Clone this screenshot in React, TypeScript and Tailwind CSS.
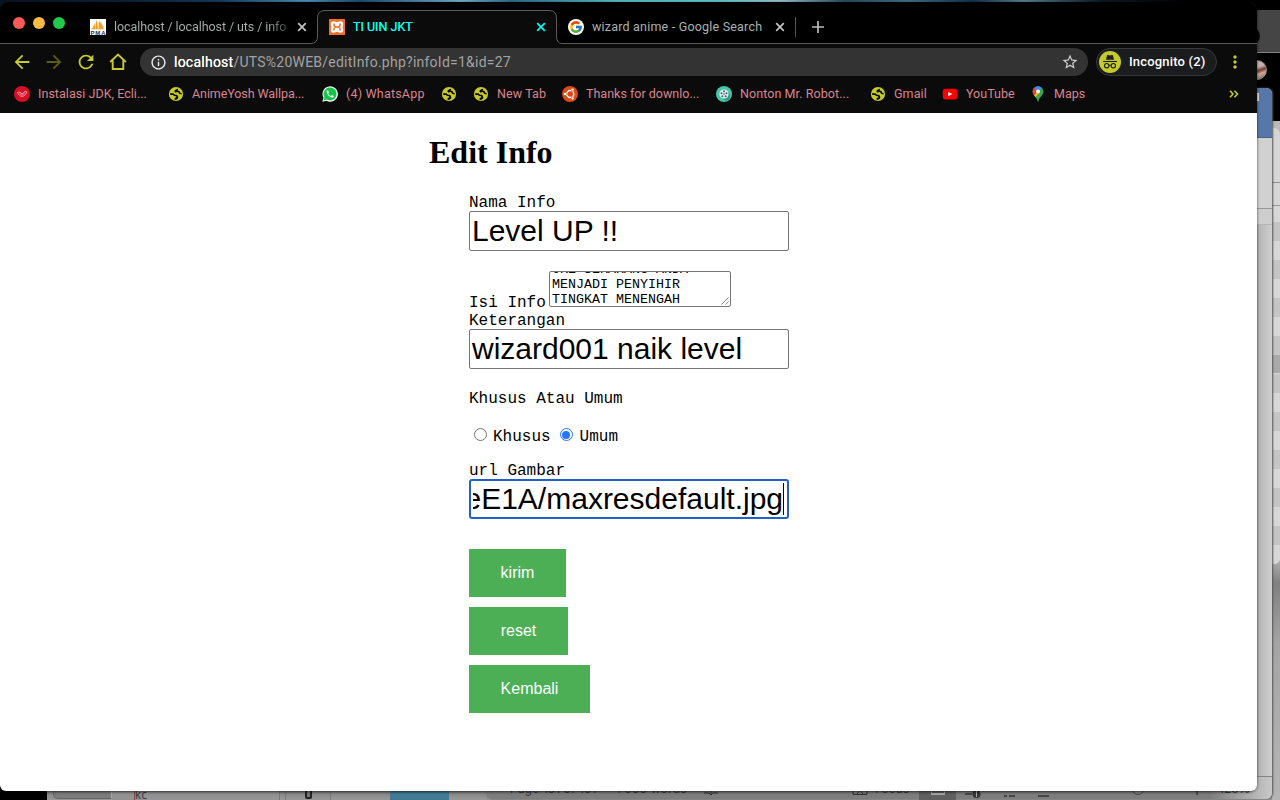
import React from "react";
import { FcGoogle } from "react-icons/fc";
import {
  MdArrowBack,
  MdArrowForward,
  MdRefresh,
  MdStarOutline,
  MdInfoOutline,
  MdMoreVert,
} from "react-icons/md";

const LIME = "#c5cb2b";

function PmaIcon() {
  return (
    <svg width="16" height="16" viewBox="0 0 16 16" className="shrink-0">
      <rect width="16" height="16" fill="#fff" />
      <path d="M1.500 10C3.500 8 4.500 5 4.700 3L5 10ZM5.500 10L6 1C7.500 3 8 7 8 10ZM8.500 10L9 2C12 4 13 7 13.500 10Z" fill="#f89c1c" />
      <path d="M1 10H14" stroke="#f5b45a" strokeWidth="0.800" />
      <text x="0.5" y="15.800" fontSize="6" fontWeight="700" textLength="15" fontFamily="Liberation Sans, sans-serif" fill="#2a2d55">PMA</text>
    </svg>
  );
}

function XamppIcon() {
  return (
    <svg width="16" height="16" viewBox="0 0 16 16" className="shrink-0">
      <rect width="16" height="16" rx="0.500" fill="#f0702a" />
      <path d="M4.500 2.300C6.200 2.300 7 3.200 8 3.200S9.800 2.300 11.500 2.300C13.400 2.300 14.200 3.700 14.200 5.300C14.200 6.700 13.600 7.300 13.600 8S14.200 9.300 14.200 10.700C14.200 12.400 13.400 13.700 11.500 13.700C9.800 13.700 9 12.800 8 12.800S6.200 13.700 4.500 13.700C2.600 13.700 1.800 12.400 1.800 10.700C1.800 9.300 2.400 8.700 2.400 8S1.800 6.700 1.800 5.300C1.800 3.700 2.600 2.300 4.500 2.300Z" fill="#fff" />
      <path d="M5 11V10Q5 8 8 8T11 6V5M5 5V6Q5 8 8 8T11 10V11" fill="none" stroke="#f0702a" strokeWidth="1.500" strokeLinecap="round" />
    </svg>
  );
}

function GlobeIcon() {
  return (
    <svg width="16" height="16" viewBox="0 0 16 16" className="shrink-0">
      <circle cx="8" cy="8" r="7.100" fill={LIME} />
      <path d="M10.200 2.800L8.800 3L6.600 4.200L6.500 6L8 6.700L8.800 6L10.300 6.200L10.800 7.800L13.600 8.400L13.700 7L12.300 6.800L11.500 4.800L9.700 4.700ZM2.200 7L2.300 9L5 9L6 10L8 10.300L8.300 11.300L6.700 12L6.500 13.800L8 14L10.300 12.200L10 9.800L8.500 8.800L7 8.700L5.800 7.500Z" fill="#0b0b0b" />
    </svg>
  );
}

function RedHeartIcon() {
  return (
    <svg width="16" height="16" viewBox="0 0 16 16" className="shrink-0">
      <circle cx="8" cy="8" r="8" fill="#d70f26" />
      <path d="M3.500 6.500C5 5.800 7 6.300 8 8C9.500 6 12 4.800 12.600 5.500C13 7.500 10 10.300 8.200 10.500C6 10.500 4.500 8.500 3.500 6.500M6 7.500L8 9.500L11 6.500" fill="none" stroke="#f7a8b2" strokeWidth="0.900" />
    </svg>
  );
}

function WhatsIcon() {
  return (
    <svg width="16" height="16" viewBox="0 0 16 16" className="shrink-0">
      <path d="M0.300 15.800L1.500 11.800A7.700 7.700 0 1 1 4.400 14.700Z" fill="#fff" />
      <path d="M1.600 14.500L2.500 11.400A6.500 6.500 0 1 1 4.800 13.600Z" fill="#15c549" />
      <path d="M5.500 4.200C4.500 4.600 4.300 6.200 5.100 7.600C6.100 9.700 8 11.300 9.800 11.600C11.200 11.700 12 10.800 11.800 10L10 9L9 10C7.800 9.500 6.800 8.500 6.200 7.400L6.900 6.500L6.200 4.500Z" fill="#fff" />
    </svg>
  );
}

function UbuntuIcon() {
  return (
    <svg width="16" height="16" viewBox="0 0 16 16" className="shrink-0">
      <circle cx="8" cy="8" r="8" fill="#dd4814" />
      <circle cx="8.300" cy="8" r="3.500" fill="none" stroke="#fff" strokeWidth="1.500" />
      <path d="M8.300 8L2 8M8.300 8L11.500 2.500M8.300 8L11.500 13.500" stroke="#dd4814" strokeWidth="0.900" />
      <circle cx="3" cy="8" r="1.300" fill="#fff" />
      <circle cx="10.600" cy="3.600" r="1.400" fill="#fff" stroke="#dd4814" strokeWidth="0.500" />
      <circle cx="10.600" cy="12.400" r="1.400" fill="#fff" stroke="#dd4814" strokeWidth="0.500" />
    </svg>
  );
}

function ReelIcon() {
  return (
    <svg width="16" height="16" viewBox="0 0 16 16" className="shrink-0">
      <circle cx="8" cy="8" r="8" fill="#43c7a4" />
      <path d="M10 4L14 8V13L10 15L6 12Z" fill="#2b9f86" />
      <circle cx="8" cy="8" r="4.600" fill="#e8eef4" />
      <circle cx="8" cy="8" r="0.800" fill="#35495c" />
      <circle cx="8" cy="5.300" r="1" fill="#46596d" />
      <circle cx="10.500" cy="7.200" r="1" fill="#46596d" />
      <circle cx="9.600" cy="10.200" r="1" fill="#46596d" />
      <circle cx="6.400" cy="10.200" r="1" fill="#46596d" />
      <circle cx="5.500" cy="7.200" r="1" fill="#46596d" />
    </svg>
  );
}

function YouTubeIcon() {
  return (
    <svg width="16" height="16" viewBox="0 0 16 16" className="shrink-0">
      <rect x="0.800" y="2.800" width="14.400" height="10.600" rx="2.400" fill="#f00" />
      <path d="M6.200 6L10.300 8.100L6.200 10.200Z" fill="#fff" />
    </svg>
  );
}

function MapsIcon() {
  return (
    <svg width="16" height="16" viewBox="0 0 16 16" className="shrink-0">
      <defs>
        <clipPath id="pin">
          <path d="M8 0.200A5.300 5.300 0 0 0 2.700 5.600C2.700 9.600 7.200 11.500 7.500 15.300Q8 16 8.500 15.300C8.800 11.500 13.300 9.600 13.300 5.600A5.300 5.300 0 0 0 8 0.200Z" />
        </clipPath>
      </defs>
      <g clipPath="url(#pin)">
        <rect width="16" height="16" fill="#34a853" />
        <path d="M0 13L8 4L9 7L4 13Z" fill="#fbbc04" />
        <path d="M8 5.500L13.500 -1H0V8Z" fill="#4285f4" />
        <path d="M8 5.500L3.500 1L0 4V9L4 9.500Z" fill="#ea4335" />
      </g>
      <circle cx="8" cy="5.500" r="2" fill="#fff" />
    </svg>
  );
}

function Close({ color }: { color: string }) {
  return (
    <svg width="10" height="10" viewBox="0 0 10 10" className="shrink-0">
      <path d="M1.200 1.200L8.800 8.800M8.800 1.200L1.200 8.800" stroke={color} strokeWidth="1.700" />
    </svg>
  );
}

function TabStrip() {
  return (
    <div className="relative flex h-[42px] shrink-0 items-center rounded-t-[10px] bg-black pt-2 text-[12.5px]">
      <div className="absolute bottom-0 left-0 h-px w-[311px] bg-[#5a5a5a]" />
      <div className="absolute bottom-0 left-[562px] right-0 h-px bg-[#5a5a5a]" />
      <div className="flex w-[311px] shrink-0 items-center">
        <div className="ml-[13px] flex gap-2">
          <div className="mb-2 size-3 rounded-full bg-[#fc5b57]" />
          <div className="mb-2 size-3 rounded-full bg-[#fdbb3f]" />
          <div className="mb-2 size-3 rounded-full bg-[#20cb4b]" />
        </div>
        <div className="ml-[25px] flex items-center">
          <PmaIcon />
          <div className="ml-2 w-[175px] whitespace-nowrap bg-gradient-to-r from-[#a8b2b0] from-88% to-[#333] bg-clip-text tracking-[-0.08px] text-transparent">
            localhost / localhost / uts / info
          </div>
          <div className="ml-2 flex"><Close color="#c4c4c4" /></div>
        </div>
      </div>
      <div className="relative h-[34px] w-[251px] shrink-0">
        <svg className="absolute left-0 top-0" width="251" height="34" viewBox="0 0 251 34">
          <path d="M0 33.500Q6.500 33.500 6.500 26V8Q6.500 0.500 14 0.500H238Q245.500 0.500 245.500 8V26Q245.500 33.500 251 33.500V34H0Z" fill="#0b0b0b" />
          <path d="M0 33.500Q6.500 33.500 6.500 26V8Q6.500 0.500 14 0.500H238Q245.500 0.500 245.500 8V26Q245.500 33.500 251 33.500" fill="none" stroke="#5c5c5c" />
        </svg>
        <div className="relative flex h-[34px] items-center pl-[18px] text-[#00ffee]">
          <XamppIcon />
          <span className="ml-2 w-[183px] [text-shadow:0_0_0.4px_#00ffee]">TI UIN JKT</span>
          <Close color="#00ffee" />
        </div>
      </div>
      <div className="flex items-center pl-[6px]">
        <div className="flex size-4 items-center justify-center rounded-full bg-white"><FcGoogle size={14} /></div>
        <span className="ml-2 w-[175px] whitespace-nowrap tracking-[0.2px] text-[#a8b2b0]">wizard anime - Google Search</span>
        <div className="ml-2 flex"><Close color="#c4c4c4" /></div>
        <div className="ml-[10px] h-5 w-px bg-[#555]" />
        <svg className="ml-4" width="12" height="12" viewBox="0 0 12 12">
          <path d="M6 0V12M0 6H12" stroke="#bababa" strokeWidth="1.700" />
        </svg>
      </div>
    </div>
  );
}

function Toolbar() {
  return (
    <div className="flex h-9 shrink-0 items-center text-[#c5cb2b]">
      <div className="flex w-[140px] shrink-0 items-center gap-[10px] pl-[11px]">
        <MdArrowBack size={22} />
        <MdArrowForward size={22} className="text-[#5d5d14]" />
        <MdRefresh size={22} />
        <svg width="22" height="22" viewBox="0 0 22 22">
          <path d="M3.200 11L11 3.500L18.800 11M5.700 9V18H16.300V9" fill="none" stroke={LIME} strokeWidth="1.900" />
        </svg>
      </div>
      <div className="flex h-7 w-[948px] items-center rounded-full bg-[#333] pl-2.5 pr-[9px] text-[14px] text-[#a2a2a2]">
        <MdInfoOutline size={17} className="text-[#ededed]" />
        <span className="ml-[7px] flex-1 tracking-[0.24px]"><span className="text-white [text-shadow:0_0_0.5px_white]">localhost</span>/UTS%20WEB/editInfo.php?infoId=1&amp;id=27</span>
        <MdStarOutline size={18} className="text-[#d0d0d0]" />
      </div>
      <div className="ml-2 flex h-7 w-[121px] items-center rounded-full border border-[#38393b] bg-[#1b1c1e] pl-[2px] text-[13px] text-white">
        <svg width="22" height="22" viewBox="0 0 22 22" className="shrink-0">
          <circle cx="11" cy="11" r="11" fill={LIME} />
          <path d="M7 8.800L8 4.500Q8.300 3.600 9.300 4L11 4.600L12.700 4Q13.700 3.600 14 4.500L15 8.800Z" fill="#20211c" />
          <path d="M4 10.500H18" stroke="#20211c" strokeWidth="1.100" />
          <circle cx="7.700" cy="14.700" r="2.200" fill="none" stroke="#20211c" strokeWidth="1.100" />
          <circle cx="14.300" cy="14.700" r="2.200" fill="none" stroke="#20211c" strokeWidth="1.100" />
          <path d="M9.900 14.500Q11 13.700 12.100 14.500" fill="none" stroke="#20211c" />
        </svg>
        <span className="ml-2 whitespace-nowrap font-medium tracking-[0.18px]">Incognito (2)</span>
      </div>
      <MdMoreVert size={20} className="ml-[8px]" />
    </div>
  );
}

const bookmarks = [
  { icon: <RedHeartIcon />, text: "Instalasi JDK, Ecli...", box: "w-[154px] tracking-[0.04px]" },
  { icon: <GlobeIcon />, text: "AnimeYosh Wallpa...", box: "w-[154px] tracking-[-0.08px]" },
  { icon: <WhatsIcon />, text: "(4) WhatsApp", box: "w-[119px] tracking-[0.2px]" },
  { icon: <GlobeIcon />, text: "", box: "w-[32px]" },
  { icon: <GlobeIcon />, text: "New Tab", box: "w-[89px] tracking-[0.1px]" },
  { icon: <UbuntuIcon />, text: "Thanks for downlo...", box: "w-[154px] tracking-[0px]" },
  { icon: <ReelIcon />, text: "Nonton Mr. Robot...", box: "w-[154px] tracking-[0.08px]" },
  { icon: <GlobeIcon />, text: "Gmail", box: "w-[72px] tracking-[0.1px]" },
  { icon: <YouTubeIcon />, text: "YouTube", box: "w-[88px] tracking-[0px]" },
  { icon: <MapsIcon />, text: "Maps", box: "w-[198px] tracking-[0px]" },
];

function Bookmarks() {
  return (
    <div className="flex h-[33px] shrink-0 items-center pb-[5px] pl-[14px] text-[12.5px] text-[#d9858f]">
      {bookmarks.map((b, i) => (
        <div key={i} className={"flex shrink-0 items-center gap-2 whitespace-nowrap " + b.box}>
          {b.icon}
          <span>{b.text}</span>
        </div>
      ))}
      <svg width="10" height="8" viewBox="0 0 10 8" className="ml-px">
        <path d="M1 0.800L4 4L1 7.200M5.500 0.800L8.500 4L5.500 7.200" fill="none" stroke={LIME} strokeWidth="1.600" />
      </svg>
    </div>
  );
}

const field = "flex h-10 w-[320px] items-center overflow-hidden rounded-[2px] border border-[#767676] bg-white px-[2px] font-['Liberation_Sans',sans-serif] text-[30px] leading-[34px] whitespace-nowrap";

const label = "h-[18px] pt-px";

function Page() {
  return (
    <div className="flex-1 rounded-b-[6px] bg-white pl-[429px] pt-[21px] text-black">
      <h1 className="font-['Liberation_Serif',serif] text-[32px] font-bold leading-[37px]">Edit Info</h1>
      <form className="ml-10 mt-[22px] flex flex-col items-start font-['Liberation_Mono',monospace] text-[16px] leading-[18px]">
        <label className={label}>Nama Info</label>
        <div className={field}>Level UP !!</div>
        <div className="mt-5 flex items-end">
          <label className="-mb-1 h-[17px] w-20">Isi Info</label>
          <div className="relative h-9 w-[182px] overflow-hidden rounded-[2px] border border-[#767676] px-[2px] text-[13.333px] leading-[15px]">
            <div className="-mt-[10px] flex flex-col">
              <span>OKE SEKARANG ANDA</span>
              <span>MENJADI PENYIHIR</span>
              <span>TINGKAT MENENGAH</span>
            </div>
            <svg width="8" height="8" viewBox="0 0 8 8" className="absolute bottom-px right-px">
              <path d="M0.500 7.500L7.500 0.500M4.500 7.500L7.500 4.500" stroke="#666" strokeWidth="0.800" />
            </svg>
          </div>
        </div>
        <label className="mt-1 h-[18px] pt-px">Keterangan</label>
        <div className={field}>wizard001 naik level</div>
        <label className="mt-5 h-[18px] pt-px">Khusus Atau Umum</label>
        <div className="mt-5 flex h-[18px] items-center">
          <span className="mb-[3px] ml-[5px] size-[13px] rounded-full border border-[#767676]" />
          <span className="ml-[6px] pt-[2px]">Khusus</span>
          <span className="mb-[3px] ml-[9px] flex size-[13px] items-center justify-center rounded-full border border-[#2676ff]">
            <span className="size-2 rounded-full bg-[#2676ff]" />
          </span>
          <span className="ml-[7px] pt-[2px]">Umum</span>
        </div>
        <label className="mt-4 h-[18px] pt-px">url Gambar</label>
        <div className="flex h-10 w-[320px] items-center rounded-[3px] border-2 border-[#2161c7] px-[2px] font-['Liberation_Sans',sans-serif] text-[30px] leading-[34px]">
          <div className="flex h-[34px] w-[310px] justify-end overflow-hidden whitespace-nowrap">eE1A/maxresdefault.jpg</div>
          <div className="h-8 w-px bg-black" />
        </div>
        <div className="mt-[30px] flex flex-col items-start gap-[10px] font-['Liberation_Sans',sans-serif] text-white">
          <button type="button" className="h-12 w-[97px] bg-[#4caf56]">kirim</button>
          <button type="button" className="h-12 w-[99px] bg-[#4caf56]">reset</button>
          <button type="button" className="h-12 w-[121px] bg-[#4caf56]">Kembali</button>
        </div>
      </form>
    </div>
  );
}

function Desktop() {
  return (
    <div className="absolute inset-0 overflow-hidden bg-black">
      <div className="absolute inset-x-0 top-0 h-[8px] bg-[linear-gradient(90deg,#071522_0%,#0b2238_10%,#123a5c_17%,#4a8db5_24%,#1d4a70_28%,#6fa9c4_36%,#2d6a88_40%,#57b3bd_48%,#62c0c8_56%,#93bcc9_61%,#29485e_66%,#3b6d88_71%,#12314a_76%,#557d8e_80%,#0a1a25_86%,#000_93%)]" />
      <div className="absolute left-[1240px] top-[10px] h-[43px] w-10 border-b border-[#858585] bg-[#454545]" />
      <div className="absolute left-[1240px] top-[26px] h-5 w-5 rounded-full bg-[#070707]" />
      <div className="absolute left-[1247px] top-[60px] size-5 rounded-full border border-[#8b8b8b] bg-[linear-gradient(160deg,#c3b3aa_40%,#763a34_55%,#d0a58e_70%,#5d6970)]" />
      <div className="absolute left-[1240px] top-[121px] h-[679px] w-10 bg-[linear-gradient(180deg,#b9b9b9_0%,#b9b9b9_64%,#818181_68%,#a5a5a5_77%,#b5b5b5_100%)]" />
      <div className="absolute left-[1240px] top-[128px] flex h-[436px] w-10 flex-col overflow-hidden rounded-r-[6px] bg-[#d6d6d6]">
        <div className="h-[55px] shrink-0 border-b border-[#8f8f8f]" />
        <div className="h-[23px] shrink-0 border-b border-[#999]" />
        <div className="flex-1 bg-[repeating-linear-gradient(180deg,#d7d7d7_0_16px,#d7d7d7_16px_16px,#c5c5c5_16px_35px,#d7d7d7_35px_38px)]" />
      </div>
      <div className="absolute left-[1272px] top-[355px] h-[18px] w-2 bg-[#aaa]" />
      <div className="absolute left-[47px] top-[785px] h-[15px] w-[1225px] bg-[linear-gradient(180deg,#707070,#999)]" />
      <div className="absolute left-[485px] top-[88px] flex h-[711px] w-[787px] flex-col overflow-hidden rounded-[6px] bg-[#c4c4c4] shadow-[1px_0_2px_#555]">
        <div className="h-[50px] shrink-0 border-b border-[#4d638c] bg-[#5877a9]" />
        <div className="h-[71px] shrink-0 border-b border-[#999] bg-[#d1d1d1]" />
        <div className="h-[16px] shrink-0 border-b border-[#b5b5b5] bg-[#cecece]" />
        <div className="flex-1 border-b border-[#858585] bg-[linear-gradient(90deg,#999_771px,#b7b7b7_774px,#cfcfcf_787px)]" />
        <div className="h-[22px] shrink-0 bg-[linear-gradient(90deg,#7d7d7d_92%,#c8c8c8)]" />
      </div>
      <div className="absolute left-[1257px] top-[93px] h-2 w-[2px] bg-[#ddd]" />
      <div className="absolute left-[47px] top-[785px] flex h-[15px] w-[438px]">
        <div className="ml-[6px] h-[14px] w-[59px] rounded-bl-[5px] border-b border-l border-r border-[#666] border-r-[#aaa] bg-[#7d7d7d]" />
        <div className="flex w-9 items-end justify-end border-r border-[#999] bg-[#929292]"><span className="border-l border-[#8b4545] font-['Noto_Sans'] text-[12px] leading-[11px] text-[#414141]">kc</span></div>
        <div className="h-full w-[132px] border-r border-[#777] bg-[#949494]/60" />
        <div className="h-full w-[6px] border-r border-[#777]" />
        <div className="h-full w-[45px] border-r border-[#777]" />
        <div className="ml-[59px] h-full w-[59px] bg-[#427a96]" />
      </div>
      <div className="absolute left-[305px] top-[788px] h-[11px] w-[7px] rounded-b-[2px] border-2 border-[#252525] bg-[#777]" />
      <div className="absolute left-[510px] top-[781px] flex h-4 items-center whitespace-nowrap font-['Inter',sans-serif] text-[12px] leading-4 text-[#393939]">
        <span className="w-[107px] tracking-[0.1px]">Page 131 of 161</span>
        <span className="w-[87px] tracking-[0.3px]">7665 words</span>
        <svg width="14" height="12" viewBox="0 0 14 12"><path d="M0 10H5L7 12L9 10H14M7 0V12" fill="none" stroke="#333" /></svg>
        <svg width="16" height="12" viewBox="0 0 16 12" className="ml-[134px]"><path d="M1 1H15V11.500H1ZM5 11L8 7L11 11" fill="none" stroke="#333" /></svg>
        <span className="ml-[7px]">Focus</span>
      </div>
      <div className="absolute left-[919px] top-[780px] flex h-5 w-[37px] items-end justify-center bg-[#606060] pb-[5px]">
        <div className="h-3 w-3.5 border border-b-2 border-[#a8a8a8]" />
      </div>
      <svg className="absolute left-[960px] top-[785px]" width="250" height="15" viewBox="0 0 250 15">
        <path d="M5 9H12M44 11H47M49 11H55M78 11H89M237 5V10" fill="none" stroke="#353535" strokeWidth="1.300" />
        <circle cx="16.500" cy="9" r="4" fill="#363636" />
        <path d="M16.500 6V12" stroke="#aaa" />
        <circle cx="178" cy="4" r="5.500" fill="#858585" stroke="#444" />
      </svg>
      <div className="absolute left-[1219px] top-[781px] font-['Inter',sans-serif] text-[12px] leading-4 text-[#393939]">128%</div>
    </div>
  );
}

export default function App() {
  return (
    <div className="relative h-[800px] w-[1280px] overflow-hidden">
      <Desktop />
      <div className="relative pt-[2px]">
        <div className="flex h-[789px] w-[1257px] flex-col rounded-[8px] bg-[#0b0b0b] font-['Roboto',sans-serif] shadow-[0_1px_3px_rgba(0,0,0,0.7)]">
          <TabStrip />
          <Toolbar />
          <Bookmarks />
          <Page />
        </div>
      </div>
    </div>
  );
}
